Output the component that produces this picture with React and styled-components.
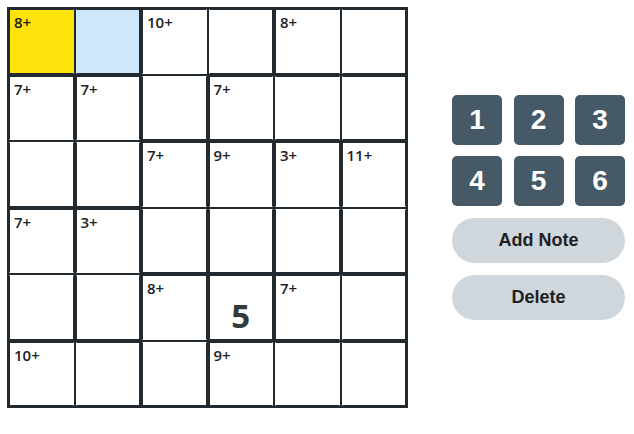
import React from "react";
import styled, { createGlobalStyle } from "styled-components";

const DARK = "#222a2f";

const GlobalStyle = createGlobalStyle`
  html, body { margin: 0; padding: 0; background: #ffffff; }
  body { font-family: "Open Sans", "Liberation Sans", sans-serif; }
`;

const Page = styled.div`
  display: flex;
  align-items: center;
  gap: 44px;
  padding: 7px;
  width: 634px;
  height: 434px;
  box-sizing: border-box;
  align-content: flex-start;
  align-items: flex-start;
`;

const Board = styled.div`
  display: grid;
  grid-template-columns: repeat(6, 1fr);
  grid-template-rows: repeat(6, 1fr);
  gap: 2px;
  padding: 2px;
  width: 401px;
  height: 401px;
  box-sizing: border-box;
  background: ${DARK};
`;

const Cell = styled.div`
  display: flex;
  flex-direction: column;
  box-sizing: border-box;
  min-width: 0;
  min-height: 0;
  background: ${(p) => p.$bg};
  border-style: solid;
  border-width: 1px;
  border-top-color: ${(p) => (p.$t ? DARK : "transparent")};
  border-right-color: ${(p) => (p.$r ? DARK : "transparent")};
  border-bottom-color: ${(p) => (p.$b ? DARK : "transparent")};
  border-left-color: ${(p) => (p.$l ? DARK : "transparent")};
`;

const Label = styled.span`
  font-family: "Open Sans", sans-serif;
  font-weight: 600;
  font-size: 15px;
  line-height: 18px;
  color: #1d2124;
  padding: 3px 0 0 4px;
  height: 18px;
`;

const Value = styled.span`
  margin-top: auto;
  align-self: center;
  font-family: "Open Sans", sans-serif;
  font-weight: 700;
  font-size: 33px;
  line-height: 33px;
  color: #33393d;
  margin-bottom: 7px;
`;

const Panel = styled.div`
  display: flex;
  flex-direction: column;
  width: 173px;
  margin-top: 88px;
  gap: 12px;
`;

const Keypad = styled.div`
  display: grid;
  grid-template-columns: repeat(3, 50px);
  justify-content: space-between;
  row-gap: 11px;
`;

const Key = styled.button`
  width: 50px;
  height: 50px;
  border: none;
  border-radius: 5px;
  background: #465966;
  color: #ffffff;
  font-family: "Liberation Sans", Arial, sans-serif;
  font-weight: 700;
  font-size: 28px;
  padding: 0;
  display: flex;
  align-items: center;
  justify-content: center;
`;

const Pill = styled.button`
  width: 173px;
  height: 45px;
  border: none;
  border-radius: 23px;
  background: #d0d7dc;
  color: #1d2226;
  font-family: "Liberation Sans", Arial, sans-serif;
  font-weight: 700;
  font-size: 18px;
  padding: 0;
`;

const cages = [
  ["A", "A", "B", "B", "C", "C"],
  ["D", "E", "B", "F", "F", "F"],
  ["D", "E", "G", "H", "I", "J"],
  ["K", "L", "G", "H", "I", "J"],
  ["K", "L", "M", "N", "O", "O"],
  ["P", "P", "M", "Q", "Q", "Q"],
];

const labels = {
  "0-0": "8+",
  "0-2": "10+",
  "0-4": "8+",
  "1-0": "7+",
  "1-1": "7+",
  "1-3": "7+",
  "2-2": "7+",
  "2-3": "9+",
  "2-4": "3+",
  "2-5": "11+",
  "3-0": "7+",
  "3-1": "3+",
  "4-2": "8+",
  "4-4": "7+",
  "5-0": "10+",
  "5-3": "9+",
};

const values = { "4-3": "5" };
const fills = { "0-0": "#fee20c", "0-1": "#cde7fb" };

const differs = (r, c, r2, c2) =>
  r2 < 0 || r2 > 5 || c2 < 0 || c2 > 5 || cages[r][c] !== cages[r2][c2];

export default function App() {
  const cells = [];
  for (let r = 0; r < 6; r++) {
    for (let c = 0; c < 6; c++) {
      const key = `${r}-${c}`;
      cells.push(
        <Cell
          key={key}
          $bg={fills[key] || "#ffffff"}
          $t={differs(r, c, r - 1, c)}
          $b={differs(r, c, r + 1, c)}
          $l={differs(r, c, r, c - 1)}
          $r={differs(r, c, r, c + 1)}
        >
          <Label>{labels[key] || ""}</Label>
          {values[key] && <Value>{values[key]}</Value>}
        </Cell>
      );
    }
  }
  return (
    <>
      <GlobalStyle />
      <Page>
        <Board>{cells}</Board>
        <Panel>
          <Keypad>
            {[1, 2, 3, 4, 5, 6].map((n) => (
              <Key key={n}>{n}</Key>
            ))}
          </Keypad>
          <Pill>Add Note</Pill>
          <Pill>Delete</Pill>
        </Panel>
      </Page>
    </>
  );
}
